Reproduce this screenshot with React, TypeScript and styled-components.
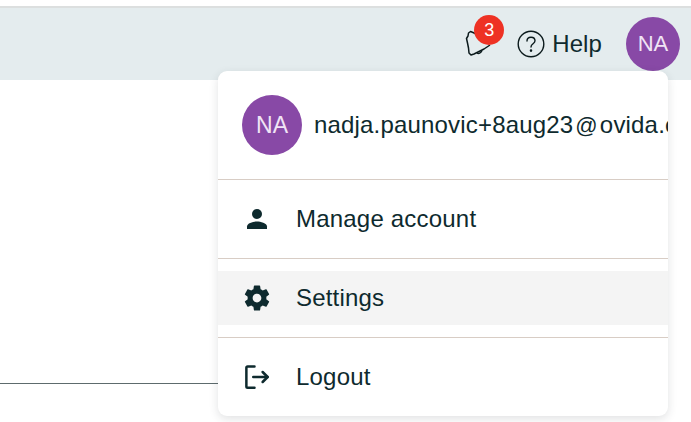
import React from "react";
import styled, { createGlobalStyle } from "styled-components";

const GlobalStyle = createGlobalStyle`
  html, body {
    margin: 0;
    padding: 0;
    background: #ffffff;
    overflow: hidden;
  }
  body {
    font-family: "Liberation Sans", Arial, sans-serif;
    color: #0e2a2e;
  }
`;

const Page = styled.div`
  position: relative;
  width: 691px;
  height: 422px;
  padding-top: 6px;
  box-sizing: border-box;
  overflow: hidden;
`;

const Header = styled.header`
  height: 74px;
  box-sizing: border-box;
  border-top: 2px solid #dcdfdf;
  background: #e4ecee;
  display: flex;
  align-items: flex-start;
  justify-content: flex-end;
  padding: 9px 11px 0 0;
`;

const IconSlot = styled.div`
  position: relative;
  width: 28px;
  height: 28px;
  margin: 11px 24px 0 0;
`;

const Badge = styled.span`
  position: absolute;
  left: 9px;
  top: -13px;
  width: 30px;
  height: 30px;
  border-radius: 50%;
  background: #ee3224;
  color: #ffffff;
  font-size: 18px;
  line-height: 30px;
  text-align: center;
`;

const HelpLink = styled.div`
  display: flex;
  align-items: center;
  gap: 7px;
  height: 27px;
  margin: 13px 24px 0 0;
  font-size: 24px;
  letter-spacing: 0.1px;
`;

const Avatar = styled.div<{ $size: number; $font: number }>`
  width: ${(p) => p.$size}px;
  height: ${(p) => p.$size}px;
  flex-shrink: 0;
  border-radius: 50%;
  background: #8849a6;
  color: #f0e4f5;
  font-size: ${(p) => p.$font}px;
  display: flex;
  align-items: center;
  justify-content: center;
`;

const Rule = styled.div`
  position: absolute;
  left: 0;
  top: 383px;
  width: 218px;
  height: 1px;
  background: #5d6b6d;
`;

const Menu = styled.div`
  position: absolute;
  left: 218px;
  top: 71px;
  width: 450px;
  height: 345px;
  border-radius: 9px;
  background: #ffffff;
  box-shadow: 0 3px 10px rgba(40, 50, 60, 0.14);
  overflow: hidden;
`;

const Profile = styled.div`
  height: 108px;
  box-sizing: border-box;
  padding: 24px 0 0 24px;
  display: flex;
  align-items: flex-start;
  gap: 12px;
`;

const Email = styled.span`
  font-size: 24px;
  line-height: 60px;
  letter-spacing: 0.18px;
  white-space: nowrap;
`;

const At = styled.span`
  font-size: 22px;
  margin: 0 2px;
`;

const Divider = styled.div`
  height: 1px;
  background: #d8cdc5;
`;

const Section = styled.div`
  padding: 12px 0;
`;

const Item = styled.div<{ $active?: boolean }>`
  height: 54px;
  display: flex;
  align-items: center;
  padding-left: 24px;
  background: ${(p) => (p.$active ? "#f4f4f4" : "transparent")};
  font-size: 24px;
  letter-spacing: 0.2px;
`;

const ItemIcon = styled.span`
  width: 30px;
  height: 30px;
  margin-right: 24px;
  display: flex;
`;

const BellIcon = () => (
  <svg width="28" height="28" viewBox="0 0 28 28" fill="none" stroke="#0b1a1c" strokeWidth="1.5" strokeLinejoin="round">
    <path d="M11 6 L8 4.5 L5.5 3.5 L3.5 5 L3 8 L1.5 10.5 L2.5 15 L3.5 20 L4 25 L6 27 L9 26 L14 23.5 L19 21 L25 17" />
    <path d="M12 25 C13.5 26 16 25 17 22.5" />
  </svg>
);

const HelpIcon = () => (
  <svg width="28" height="28" viewBox="0 0 28 28" fill="none" stroke="#0b1a1c" strokeWidth="1.4" strokeLinecap="round">
    <circle cx="14" cy="14" r="12.8" />
    <path d="M10 11 C10 8.4 11.8 7.2 14 7.2 C16.4 7.2 18 8.8 18 10.8 C18 13.8 14 13.8 14 17" />
    <circle cx="14" cy="20.6" r="0.6" fill="#0b1a1c" />
  </svg>
);

const PersonIcon = () => (
  <svg width="30" height="30" viewBox="0 0 24 24" fill="#0e2a2e">
    <circle cx="12" cy="8" r="4" />
    <path d="M4 20v-2c0-2.7 5.3-4 8-4s8 1.3 8 4v2z" />
  </svg>
);

const GearIcon = () => (
  <svg width="30" height="30" viewBox="0 0 24 24" fill="#0e2a2e">
    <path d="M19.43 12.98c.04-.32.07-.64.07-.98s-.03-.66-.07-.98l2.11-1.65c.19-.15.24-.42.12-.64l-2-3.46c-.12-.22-.39-.3-.61-.22l-2.49 1c-.52-.4-1.08-.73-1.69-.98l-.38-2.65C14.46 2.18 14.25 2 14 2h-4c-.25 0-.46.18-.49.42l-.38 2.65c-.61.25-1.17.59-1.69.98l-2.49-1c-.23-.09-.49 0-.61.22l-2 3.46c-.13.22-.07.49.12.64l2.11 1.65c-.04.32-.07.65-.07.98s.03.66.07.98l-2.11 1.65c-.19.15-.24.42-.12.64l2 3.46c.12.22.39.3.61.22l2.49-1c.52.4 1.08.73 1.69.98l.38 2.65c.03.24.24.42.49.42h4c.25 0 .46-.18.49-.42l.38-2.65c.61-.25 1.17-.59 1.69-.98l2.49 1c.23.09.49 0 .61-.22l2-3.46c.12-.22.07-.49-.12-.64l-2.11-1.65zM12 15.5c-1.93 0-3.5-1.57-3.5-3.5s1.57-3.5 3.5-3.5 3.5 1.57 3.5 3.5-1.57 3.5-3.5 3.5z" />
  </svg>
);

const LogoutIcon = () => (
  <svg width="30" height="30" viewBox="0 0 24 24" fill="none" stroke="#0e2a2e" strokeWidth="2" strokeLinecap="round" strokeLinejoin="round">
    <path d="M10 3.5H4.5a1 1 0 0 0-1 1v15a1 1 0 0 0 1 1H10" />
    <path d="M9 12h11.5" />
    <path d="M16.5 8l4 4-4 4" />
  </svg>
);

const menuItems = [
  { label: "Manage account", icon: <PersonIcon /> },
  { label: "Settings", icon: <GearIcon />, active: true },
  { label: "Logout", icon: <LogoutIcon /> },
];

export default function App(): React.JSX.Element {
  return (
    <Page>
      <GlobalStyle />
      <Header>
        <IconSlot>
          <BellIcon />
          <Badge>3</Badge>
        </IconSlot>
        <HelpLink>
          <HelpIcon />
          Help
        </HelpLink>
        <Avatar $size={54} $font={22}>NA</Avatar>
      </Header>
      <Rule />
      <Menu>
        <Profile>
          <Avatar $size={60} $font={23}>NA</Avatar>
          <Email>nadja.paunovic+8aug23<At>@</At>ovida.com</Email>
        </Profile>
        {menuItems.map((item) => (
          <React.Fragment key={item.label}>
            <Divider />
            <Section>
              <Item $active={item.active}>
                <ItemIcon>{item.icon}</ItemIcon>
                {item.label}
              </Item>
            </Section>
          </React.Fragment>
        ))}
      </Menu>
    </Page>
  );
}
